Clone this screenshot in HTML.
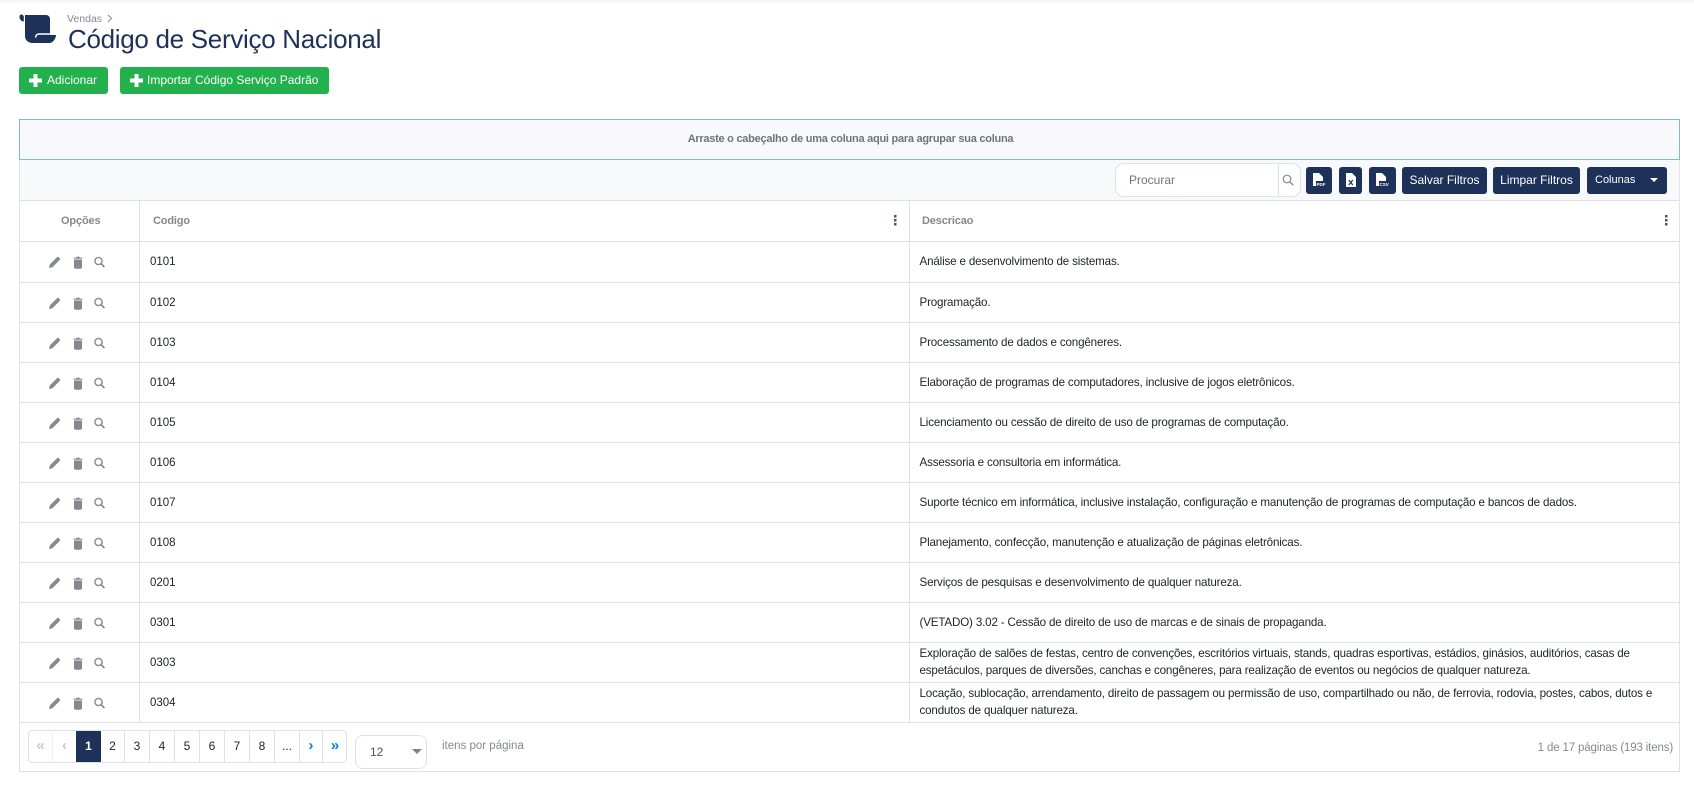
<!DOCTYPE html>
<html lang="pt-BR"><head><meta charset="utf-8"><title>Código de Serviço Nacional</title>
<style>
*{box-sizing:border-box}
html,body{margin:0;padding:0;width:1694px;height:785px;overflow:hidden;background:#fff;font-family:"Liberation Sans",sans-serif;color:#212529}
.a{position:absolute;white-space:nowrap}
.top{left:0;top:0;width:1694px;height:4px;background:linear-gradient(#f3f3f3,#fff)}
.btn{background:#22b14c;color:#fff;border-radius:3px;height:27px;top:67px;font-size:12px;line-height:27px}
.nav{background:#1e3158;color:#fff;border-radius:3px;top:167px;height:27px;font-size:12px;line-height:26px;text-align:center}
.hl{left:19px;width:1661px;height:1px;background:#dee2e6}
.vl{width:1px;top:200px;height:522px;background:#dee2e6}
.c{left:150px;font-size:11.5px;line-height:16px;margin-top:1px}
.d{left:919.5px;font-size:11.6px;line-height:22px;letter-spacing:-.16px}
.ic{left:48px}
.th{font-size:11px;font-weight:bold;color:#85898f;line-height:14px;letter-spacing:-.15px}
.pg{top:731px;height:31px;width:25px;font-size:12px;line-height:31px;text-align:center;border-right:1px solid #dee2e6;color:#212529}
.ar{font-size:15px;font-weight:bold;line-height:29px}
.lb{font:bold 4.500px "Liberation Sans",sans-serif;fill:#fff}
</style></head><body>
<svg width="0" height="0" style="position:absolute"><defs>
<symbol id="acts" viewBox="0 0 60 14">
<path d="M1 13l.8-3.600L9 2.200a1.300 1.300 0 0 1 1.800 0l.9.900a1.300 1.300 0 0 1 0 1.800L4.500 12.200z" fill="#868a90"/>
<path d="M26 4.500h8v7.800c0 .9-.6 1.400-1.300 1.400h-5.400c-.8 0-1.300-.5-1.300-1.400zM25.500 2.600h2.600l.6-1h2.600l.6 1h2.600v1.100h-8.600z" fill="#868a90"/>
<circle cx="50.500" cy="6" r="3.600" fill="none" stroke="#868a90" stroke-width="1.400"/><path d="M53.200 8.700l3.200 3.300" stroke="#868a90" stroke-width="1.700"/>
</symbol>
</defs></svg>

<div class="a top"></div>
<svg class="a" style="left:18px;top:13px" width="39" height="31" viewBox="0 0 39 31"><path d="M1.500 3.500c0-1.500 1-2 2-2s2 1 2.300 2v5c-2.500 0-4.300-2-4.300-5z" fill="#1e3158"/><path d="M7 2H28a4 4 0 0 1 4 4V22H38c-.3 4-3 8-7 8H15c-5 0-8-3-8-7z" fill="#1e3158"/><path d="M32 21H21c-2.500 0-3 1.500-3.500 3.500" fill="none" stroke="#fff" stroke-width="1.500"/></svg>
<div class="a" style="left:67px;top:12px;font-size:10.500px;line-height:14px;color:#85898f">Vendas</div>
<svg class="a" style="left:106px;top:14px" width="8" height="9" viewBox="0 0 8 9"><path d="M2 1l3.500 3.500L2 8" fill="none" stroke="#85898f"/></svg>
<div class="a" style="left:68px;top:22px;font-size:26px;line-height:34px;letter-spacing:-.3px;color:#1e3158">Código de Serviço Nacional</div>

<div class="a btn" style="left:19px;width:89px;padding-left:28px">Adicionar</div>
<div class="a btn" style="left:120px;width:209px;padding-left:27px">Importar Código Serviço Padrão</div>
<svg class="a" style="left:29px;top:74px" width="13" height="13"><path d="M4.500 0h4v4.500H13v4H8.500V13h-4V8.500H0v-4h4.500z" fill="#fff"/></svg>
<svg class="a" style="left:130px;top:74px" width="13" height="13"><path d="M4.500 0h4v4.500H13v4H8.500V13h-4V8.500H0v-4h4.500z" fill="#fff"/></svg>

<div class="a" style="left:19px;top:119px;width:1661px;height:653px;border:1px solid #dee2e6;border-top:0"></div>
<div class="a" style="left:20px;top:160px;width:1659px;height:40px;background:#f8f9fa"></div>
<div class="a" style="left:19px;top:119px;width:1661px;height:41px;background:#f8f9fa;border:1px solid #7db8ec;text-align:center;font-size:11px;font-weight:bold;letter-spacing:-.26px;color:#6c757d;line-height:38px;padding-left:2px">Arraste o cabeçalho de uma coluna aqui para agrupar sua coluna</div>

<div class="a" style="left:1115px;top:163px;width:186px;height:34px;background:#fff;border:1px solid #dee2e6;border-radius:9px;font-size:12px;color:#6c757d;line-height:32px;padding-left:13px">Procurar<span style="position:absolute;left:162px;top:0;width:1px;height:32px;background:#dee2e6"></span></div>
<svg class="a" style="left:1282px;top:174px" width="12" height="12" viewBox="0 0 12 12"><circle cx="5" cy="5" r="3.800" fill="none" stroke="#868a90" stroke-width="1.200"/><path d="M8 8l3.300 3.300" stroke="#868a90" stroke-width="1.400"/></svg>

<div class="a nav" style="left:1306px;width:26px"></div>
<svg class="a" style="left:1311px;top:172px" width="17" height="16" viewBox="0 0 17 16"><path d="M2 1h6l4 4v9H2z" fill="#fff"/><rect x="5" y="9" width="10" height="6" fill="#1e3158"/><text class="lb" x="5.500" y="14">PDF</text></svg>
<div class="a nav" style="left:1339px;width:23px"></div>
<svg class="a" style="left:1345px;top:172px" width="12" height="16" viewBox="0 0 12 16"><path d="M1 1h6l4 4v10H1z" fill="#fff"/><path d="M3.800 8l4 5m0-5l-4 5" stroke="#1e3158" stroke-width="1.200"/></svg>
<div class="a nav" style="left:1369px;width:27px"></div>
<svg class="a" style="left:1374px;top:172px" width="17" height="16" viewBox="0 0 17 16"><path d="M2 1h6l4 4v9H2z" fill="#fff"/><rect x="5" y="9" width="10" height="6" fill="#1e3158"/><text class="lb" x="5.500" y="14">CSV</text></svg>

<div class="a nav" style="left:1402px;width:85px">Salvar Filtros</div>
<div class="a nav" style="left:1493px;width:87px">Limpar Filtros</div>
<div class="a nav" style="left:1587px;width:80px;text-align:left;padding-left:8px;font-size:11px;line-height:27px">Colunas</div>
<svg class="a" style="left:1650px;top:178px" width="8" height="5"><path d="M0 0h8L4 4z" fill="#fff"/></svg>

<div class="a th" style="left:61px;top:214px">Opções</div>
<div class="a th" style="left:153px;top:214px">Codigo</div>
<div class="a th" style="left:922px;top:214px">Descricao</div>
<svg class="a" style="left:894px;top:215px" width="3" height="11"><path d="M0 0h2.500v2.500H0zM0 4h2.500v2.500H0zM0 8h2.500v2.500H0z" fill="#4b5563"/></svg>
<svg class="a" style="left:1665px;top:215px" width="3" height="11"><path d="M0 0h2.500v2.500H0zM0 4h2.500v2.500H0zM0 8h2.500v2.500H0z" fill="#4b5563"/></svg>

<div class="a vl" style="left:139px"></div><div class="a vl" style="left:909px"></div>
<div class="a hl" style="top:200px"></div><div class="a hl" style="top:241px"></div><div class="a hl" style="top:282px"></div><div class="a hl" style="top:322px"></div><div class="a hl" style="top:362px"></div><div class="a hl" style="top:402px"></div><div class="a hl" style="top:442px"></div><div class="a hl" style="top:482px"></div><div class="a hl" style="top:522px"></div><div class="a hl" style="top:562px"></div><div class="a hl" style="top:602px"></div><div class="a hl" style="top:642px"></div><div class="a hl" style="top:682px"></div><div class="a hl" style="top:722px"></div>

<svg class="a ic" style="top:255px" width="60" height="14"><use href="#acts"/></svg>
<svg class="a ic" style="top:296px" width="60" height="14"><use href="#acts"/></svg>
<svg class="a ic" style="top:336px" width="60" height="14"><use href="#acts"/></svg>
<svg class="a ic" style="top:376px" width="60" height="14"><use href="#acts"/></svg>
<svg class="a ic" style="top:416px" width="60" height="14"><use href="#acts"/></svg>
<svg class="a ic" style="top:456px" width="60" height="14"><use href="#acts"/></svg>
<svg class="a ic" style="top:496px" width="60" height="14"><use href="#acts"/></svg>
<svg class="a ic" style="top:536px" width="60" height="14"><use href="#acts"/></svg>
<svg class="a ic" style="top:576px" width="60" height="14"><use href="#acts"/></svg>
<svg class="a ic" style="top:616px" width="60" height="14"><use href="#acts"/></svg>
<svg class="a ic" style="top:656px" width="60" height="14"><use href="#acts"/></svg>
<svg class="a ic" style="top:696px" width="60" height="14"><use href="#acts"/></svg>

<div class="a c" style="top:253px">0101</div><div class="a d" style="top:251px">Análise e desenvolvimento de sistemas.</div>
<div class="a c" style="top:294px">0102</div><div class="a d" style="top:292px">Programação.</div>
<div class="a c" style="top:334px">0103</div><div class="a d" style="top:332px">Processamento de dados e congêneres.</div>
<div class="a c" style="top:374px">0104</div><div class="a d" style="top:372px">Elaboração de programas de computadores, inclusive de jogos eletrônicos.</div>
<div class="a c" style="top:414px">0105</div><div class="a d" style="top:412px">Licenciamento ou cessão de direito de uso de programas de computação.</div>
<div class="a c" style="top:454px">0106</div><div class="a d" style="top:452px">Assessoria e consultoria em informática.</div>
<div class="a c" style="top:494px">0107</div><div class="a d" style="top:492px">Suporte técnico em informática, inclusive instalação, configuração e manutenção de programas de computação e bancos de dados.</div>
<div class="a c" style="top:534px">0108</div><div class="a d" style="top:532px">Planejamento, confecção, manutenção e atualização de páginas eletrônicas.</div>
<div class="a c" style="top:574px">0201</div><div class="a d" style="top:572px">Serviços de pesquisas e desenvolvimento de qualquer natureza.</div>
<div class="a c" style="top:614px">0301</div><div class="a d" style="top:612px">(VETADO) 3.02 - Cessão de direito de uso de marcas e de sinais de propaganda.</div>
<div class="a c" style="top:654px">0303</div><div class="a d" style="top:645px;line-height:17px">Exploração de salões de festas, centro de convenções, escritórios virtuais, stands, quadras esportivas, estádios, ginásios, auditórios, casas de<br>espetáculos, parques de diversões, canchas e congêneres, para realização de eventos ou negócios de qualquer natureza.</div>
<div class="a c" style="top:694px">0304</div><div class="a d" style="top:685px;line-height:17px">Locação, sublocação, arrendamento, direito de passagem ou permissão de uso, compartilhado ou não, de ferrovia, rodovia, postes, cabos, dutos e<br>condutos de qualquer natureza.</div>

<div class="a" style="left:28px;top:730px;width:319px;height:33px;border:1px solid #dee2e6;border-radius:4px"></div>
<div class="a pg ar" style="left:29px;color:#c5c9ce;width:24px;border-right:1px solid #eef0f2">«</div>
<div class="a pg ar" style="left:53px;color:#c5c9ce;width:23px;border-right:0">‹</div>
<div class="a pg" style="left:76px;width:25px;background:#1e3158;color:#fff;font-weight:bold;border-right:0">1</div>
<div class="a pg" style="left:101px;width:24px">2</div><div class="a pg" style="left:125px">3</div><div class="a pg" style="left:150px">4</div><div class="a pg" style="left:175px">5</div><div class="a pg" style="left:200px">6</div><div class="a pg" style="left:225px">7</div><div class="a pg" style="left:250px">8</div><div class="a pg" style="left:275px">...</div>
<div class="a pg ar" style="left:300px;color:#007bff;width:23px">›</div>
<div class="a pg ar" style="left:323px;color:#007bff;width:24px;border-right:0">»</div>

<div class="a" style="left:355px;top:735px;width:72px;height:34px;border:1px solid #dee2e6;border-radius:8px;font-size:12px;color:#555;line-height:32px;padding-left:14px">12</div>
<svg class="a" style="left:412px;top:749px" width="10" height="6"><path d="M0 0h10L5 5z" fill="#80848a"/></svg>
<div class="a" style="left:442px;top:739px;font-size:11.500px;line-height:14px;color:#85898f">itens por página</div>
<div class="a" style="right:21px;top:741px;font-size:11.500px;line-height:14px;letter-spacing:-.15px;color:#85898f">1 de 17 páginas (193 itens)</div>
</body></html>
